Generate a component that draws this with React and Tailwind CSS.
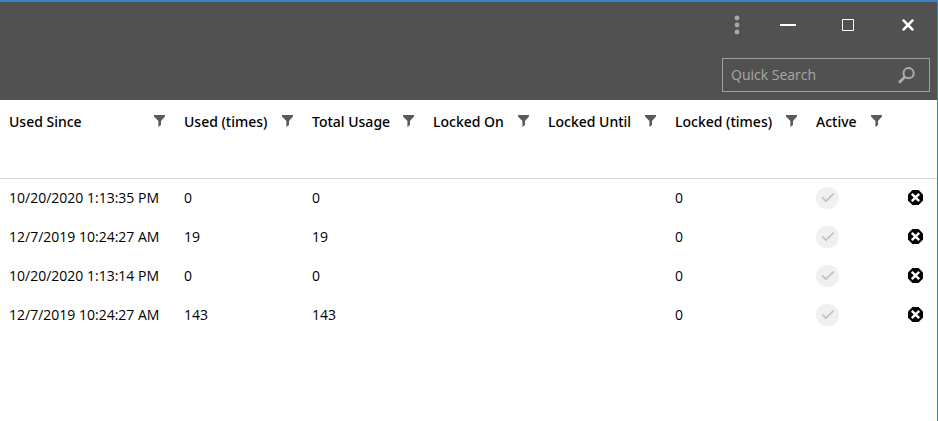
import { useState } from "react";

const columns = [
    { key: "usedSince", label: "Used Since", width: "w-[175px]" },
    { key: "used", label: "Used (times)", width: "w-[128px]" },
    { key: "total", label: "Total Usage", width: "w-[121px]" },
    { key: "lockedOn", label: "Locked On", width: "w-[115px]" },
    { key: "lockedUntil", label: "Locked Until", width: "w-[127px]" },
    { key: "locked", label: "Locked (times)", width: "w-[141px]" },
    { key: "active", label: "Active", width: "w-[85px]" },
];

const rows = [
    { id: 1, usedSince: "10/20/2020 1:13:35 PM", used: 0, total: 0, locked: 0, active: true },
    { id: 2, usedSince: "12/7/2019 10:24:27 AM", used: 19, total: 19, locked: 0, active: true },
    { id: 3, usedSince: "10/20/2020 1:13:14 PM", used: 0, total: 0, locked: 0, active: true },
    { id: 4, usedSince: "12/7/2019 10:24:27 AM", used: 143, total: 143, locked: 0, active: true },
];

const FilterIcon = () => (
    <svg width="11" height="12" viewBox="0 0 11 12" fill="#5a5a5a">
        <path d="M0 0h11v1.6L7 6v4L4.4 12V6L0 1.6z" />
    </svg>
);

const ActiveCheck = ({ id, checked }) => (
    <label className="grid h-[22px] w-[23px] place-items-center">
        <input
            type="checkbox"
            aria-label={"Active " + id}
            checked={checked}
            disabled
            className="col-start-1 row-start-1 h-[22px] w-[23px] appearance-none rounded-full bg-[#f0f0f0]"
        />
        {checked && (
            <svg className="col-start-1 row-start-1" width="14" height="11" viewBox="0 0 14 11" fill="none">
                <path d="M1.2 5.4L5 9.2L12.6 1.6" stroke="#c4c4c4" strokeWidth="1.9" />
            </svg>
        )}
    </label>
);

const DeleteIcon = () => (
    <svg width="15" height="15" viewBox="0 0 15 15">
        <path d="M4.4 0h6.2L15 4.4v6.2L10.6 15H4.4L0 10.6V4.4z" fill="#000000" />
        <path d="M3.8 3.8l7.4 7.4M11.2 3.8l-7.4 7.4" stroke="#ffffff" strokeWidth="2.5" />
    </svg>
);

const TitleBar = () => (
    <div className="-mr-px flex justify-end">
        <button aria-label="Menu" className="grid h-[46px] w-[42px] place-items-center">
            <svg width="6" height="20" viewBox="0 0 6 20" fill="#a8a8a8">
                <circle cx="3" cy="3" r="2.4" />
                <circle cx="3" cy="10" r="2.4" />
                <circle cx="3" cy="17" r="2.4" />
            </svg>
        </button>
        <button aria-label="Minimize" className="grid h-[46px] w-[60px] place-items-center">
            <svg width="16" height="2" viewBox="0 0 16 2">
                <path d="M0 0h16v2H0z" fill="#ffffff" />
            </svg>
        </button>
        <button aria-label="Maximize" className="grid h-[46px] w-[60px] place-items-center">
            <svg width="12" height="12" viewBox="0 0 12 12" fill="none">
                <path d="M.5 .5h11v11H.5z" stroke="#ffffff" />
            </svg>
        </button>
        <button aria-label="Close" className="grid h-[46px] w-[60px] place-items-center">
            <svg width="12" height="12" viewBox="0 0 12 12" fill="none">
                <path d="M.8 .8l10.4 10.4M11.2 .8L.8 11.2" stroke="#ffffff" strokeWidth="2.6" />
            </svg>
        </button>
    </div>
);

const App = () => {

    const [search, setSearch] = useState("");

    return (
        <div className="flex min-h-screen flex-col border-t-2 border-r border-[#3883cc] bg-white font-['Open_Sans','Noto_Sans',sans-serif] text-sm text-black">
            <header className="flex h-[98px] flex-col bg-[#515151]">
                <TitleBar />
                <div className="flex justify-end pt-[10px] pr-[7px] pl-2">
                    <div className="flex h-[34px] w-[208px] items-center border border-[#a0a0a0] pr-[14px] pl-2">
                        <input
                            type="text"
                            aria-label="Quick Search"
                            placeholder="Quick Search"
                            value={search}
                            onChange={(e) => setSearch(e.target.value)}
                            className="min-w-0 flex-1 bg-transparent text-white outline-none placeholder:text-[#a8a8a8]"
                        />
                        <button aria-label="Search">
                            <svg width="17" height="17" viewBox="0 0 17 17" fill="none" stroke="#acacac">
                                <circle cx="10.6" cy="6.2" r="5.1" strokeWidth="2" />
                                <path d="M6.8 10L1 15.8" strokeWidth="2.8" />
                            </svg>
                        </button>
                    </div>
                </div>
            </header>
            <table className="w-full table-fixed border-collapse text-left">
                <colgroup>
                    {columns.map((c) => (
                        <col key={c.key} className={c.width} />
                    ))}
                    <col />
                </colgroup>
                <thead className="font-['Noto_Sans','Open_Sans',sans-serif]">
                    <tr className="h-[78px] border-b border-[#d6d6d6]">
                        {columns.map((c) => (
                            <th key={c.key} className="pt-3 pr-[10px] pl-[9px] align-top font-medium whitespace-nowrap">
                                <div className="flex items-start justify-between">
                                    <span>{c.label}</span>
                                    <button aria-label={"Filter " + c.label} className="pt-[3px]">
                                        <FilterIcon />
                                    </button>
                                </div>
                            </th>
                        ))}
                        <th aria-label="Delete"></th>
                    </tr>
                </thead>
                <tbody>
                    {rows.map((row) => (
                        <tr key={row.id} className="h-[39px]">
                            {columns.map((c) => (
                                <td key={c.key} className="pl-[9px] whitespace-nowrap">
                                    {c.key === "active" ? <ActiveCheck id={row.id} checked={row.active} /> : row[c.key]}
                                </td>
                            ))}
                            <td className="pr-[14px]">
                                <button aria-label={"Delete " + row.id} className="ml-auto block">
                                    <DeleteIcon />
                                </button>
                            </td>
                        </tr>
                    ))}
                </tbody>
            </table>
        </div>
    );
};

export default App;
